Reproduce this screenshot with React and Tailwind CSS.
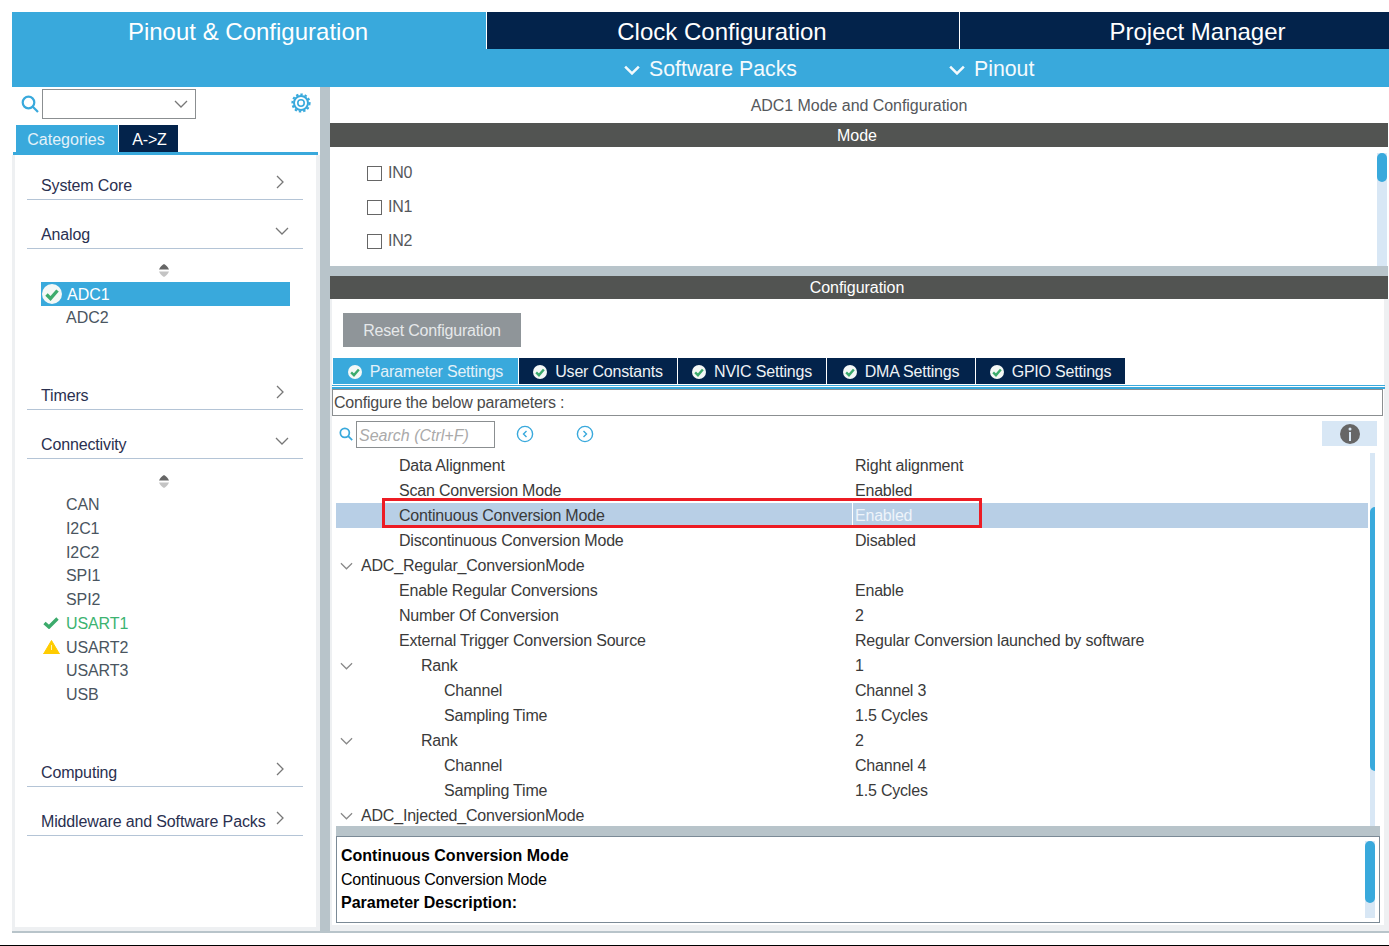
import React from 'react';

const BLUE = 'bg-[#39a9dc]';

function Chevron({ dir = 'down', className = '', weight = 1.3 }) {
  const d = dir === 'down' ? 'M1 1l6 6 6-6' : 'M1 1l6 6-6 6';
  const size = dir === 'down' ? { width: 14, height: 8, viewBox: '0 0 14 8' } : { width: 8, height: 14, viewBox: '0 0 8 14' };
  return (
    <svg {...size} className={className} fill="none" stroke="currentColor" strokeWidth={weight}>
      <path d={d} />
    </svg>
  );
}

function Magnifier({ size = 18 }) {
  return (
    <svg width={size} height={size} viewBox="0 0 18 18" fill="none" stroke="#39a9dc" strokeWidth="2.2">
      <circle cx="7.5" cy="7.5" r="5.8" />
      <path d="M11.8 11.8L17 17" />
    </svg>
  );
}

function CheckBadge({ size = 14 }) {
  return (
    <svg width={size} height={size} viewBox="0 0 20 20" className="shrink-0">
      <circle cx="10" cy="10" r="10" fill="#f4f8f6" />
      <path d="M4.5 10.5l4 4 7-8" fill="none" stroke="#3cab6c" strokeWidth="3.4" />
    </svg>
  );
}

function SortArrows() {
  return (
    <div className="flex justify-center pr-[3px]">
      <svg width="10" height="13" viewBox="0 0 10 13">
        <path d="M5 0C7 1 9 3 10 5.5H0C1 3 3 1 5 0z" fill="#666" />
        <path d="M0 7.5h10C9 10 7 12 5 13C3 12 1 10 0 7.5z" fill="#c4c4c4" />
      </svg>
    </div>
  );
}

function Section({ label, open, short, children }) {
  return (
    <>
      <div className={`ml-3 mr-[13px] ${short ? 'h-[45px]' : 'h-[49px]'} flex items-end justify-between border-b border-[#b4c4d6] pb-[3px] pl-[14px] pr-[15px] text-[#2a3050] tracking-[-0.14px]`}>
        <span className="leading-5">{label}</span>
        {open ? (
          <Chevron className="text-[#777] mb-[10px] -mr-[1px]" />
        ) : (
          <Chevron dir="right" className="text-[#777] mb-[4px] mr-[4px] relative -top-[3px]" />
        )}
      </div>
      {children}
    </>
  );
}

function Sidebar() {
  const peripherals = ['CAN', 'I2C1', 'I2C2', 'SPI1', 'SPI2', 'USART1', 'USART2', 'USART3', 'USB'];
  return (
    <aside className="w-[308px] shrink-0 flex flex-col">
      <div className="h-[38px] flex items-start pt-[2px] pl-[9px] pr-[9px]">
        <div className="mt-[6px] mr-[3px]"><Magnifier /></div>
        <div className="w-[154px] h-[30px] border border-[#8b8f91] flex items-center justify-end pr-[7px] text-[#777]">
          <Chevron />
        </div>
        <svg width="20" height="20" viewBox="0 0 20 20" className="ml-auto mt-1" fill="none" stroke="#39a9dc">
          <circle cx="10" cy="10" r="3.2" strokeWidth="1.6" />
          <circle cx="10" cy="10" r="7" strokeWidth="2" />
          <circle cx="10" cy="10" r="8.6" strokeWidth="2" strokeDasharray="2.4 2" />
        </svg>
      </div>
      <div className="flex pl-1 h-[27px] gap-px text-base">
        <div className={`w-[102px] ${BLUE} text-[#e3f1f9] flex items-center justify-center pt-[3px] pr-[2px]`}>Categories</div>
        <div className="w-[59px] bg-[#03234b] text-white flex items-center justify-center pt-[3px] pl-[2px] tracking-[-0.2px]">A-&gt;Z</div>
      </div>
      <div className="h-[3px] ml-[1px] mr-[2px] bg-[#39a9dc]" />
      <div className="flex-1 bg-[#eef0f2] px-[3px] pr-1 pb-1">
        <div className="h-full bg-white">
          <Section label="System Core" short />
          <Section label="Analog" open />
          <div className="h-[112px] pt-[15px]">
            <SortArrows />
            <div className={`mt-[5px] ml-[26px] w-[249px] h-6 ${BLUE} flex items-center text-white`}>
              <span className="ml-[1px] mr-[5px]"><CheckBadge size={20} /></span>
              <span className="pt-[2px]">ADC1</span>
            </div>
            <div className="mt-[1px] ml-[51px] h-[22px] leading-[22px] text-[#4a5560]">ADC2</div>
          </div>
          <Section label="Timers" />
          <Section label="Connectivity" open />
          <div className="h-[279px] pt-[16px]">
            <SortArrows />
            <div className="mt-[5px]">
              {peripherals.map((p) => (
                <div key={p} className={`relative h-[23.75px] leading-[24px] pl-[51px] tracking-[-0.1px] ${p === 'USART1' ? 'text-[#3cb371]' : 'text-[#4a5560]'}`}>
                  {p === 'USART1' && (
                    <svg width="16" height="12" viewBox="0 0 16 12" className="absolute left-[28px] top-[5px]">
                      <path d="M1.5 6l4.5 4 8.5-8.5" fill="none" stroke="#3cab6c" strokeWidth="3.4" />
                    </svg>
                  )}
                  {p === 'USART2' && (
                    <svg width="17" height="14" viewBox="0 0 17 14" className="absolute left-[28px] top-[4px]">
                      <path d="M8.5 0.5L16.5 14H0.5z" fill="#ffcc00" stroke="#ffcc00" strokeLinejoin="round" />
                      <path d="M8.5 5v5" stroke="#fff3b0" strokeWidth="1" />
                    </svg>
                  )}
                  {p}
                </div>
              ))}
            </div>
          </div>
          <Section label="Computing" />
          <Section label="Middleware and Software Packs" />
        </div>
      </div>
    </aside>
  );
}

function ScrollTrack({ className, thumb }) {
  return (
    <div className={`absolute w-[10px] bg-[#d8e7f5] ${className}`}>
      <div className={`absolute w-[10px] bg-[#39a9dc] rounded-[5px] ${thumb}`} />
    </div>
  );
}

const rows = [
  { n: 'Data Alignment', v: 'Right alignment', p: 'pl-[63px]' },
  { n: 'Scan Conversion Mode', v: 'Enabled', p: 'pl-[63px]' },
  { n: 'Continuous Conversion Mode', v: 'Enabled', p: 'pl-[63px]', sel: true },
  { n: 'Discontinuous Conversion Mode', v: 'Disabled', p: 'pl-[63px]' },
  { n: 'ADC_Regular_ConversionMode', v: '', p: 'pl-[25px]', open: true },
  { n: 'Enable Regular Conversions', v: 'Enable', p: 'pl-[63px]' },
  { n: 'Number Of Conversion', v: '2', p: 'pl-[63px]' },
  { n: 'External Trigger Conversion Source', v: 'Regular Conversion launched by software', p: 'pl-[63px]' },
  { n: 'Rank', v: '1', p: 'pl-[85px]', open: true },
  { n: 'Channel', v: 'Channel 3', p: 'pl-[108px]' },
  { n: 'Sampling Time', v: '1.5 Cycles', p: 'pl-[108px]' },
  { n: 'Rank', v: '2', p: 'pl-[85px]', open: true },
  { n: 'Channel', v: 'Channel 4', p: 'pl-[108px]' },
  { n: 'Sampling Time', v: '1.5 Cycles', p: 'pl-[108px]' },
  { n: 'ADC_Injected_ConversionMode', v: '', p: 'pl-[25px]', open: true },
];

function ParamTree() {
  return (
    <div className="relative h-[373px] ml-[4px] mr-[9px] overflow-hidden">
      <div className="w-[1032px]">
        {rows.map((r, i) => (
          <div key={i} className={`relative h-[25px] flex items-center text-[#3a3a3a] tracking-[-0.2px] ${r.sel ? 'bg-[#b8cfe6]' : ''}`}>
            {r.open && <Chevron className="absolute left-[4px] top-[9px] text-[#888] w-[13px]" />}
            <span className={`w-[519px] shrink-0 ${r.p}`}>{r.n}</span>
            <span className={r.sel ? 'text-[#eef4fa]' : ''}>{r.v}</span>
            {r.sel && <span className="absolute left-[516px] top-0 h-[25px] w-px bg-white" />}
          </div>
        ))}
      </div>
      <ScrollTrack className="left-[1034px] top-0 h-[373px]" thumb="top-[54px] h-[264px]" />
      <div className="absolute left-[46px] top-[45px] w-[600px] h-[30px] border-[3px] border-[#ed1c24]" />
    </div>
  );
}

function TabButton({ label, width, active }) {
  return (
    <div style={{ width }} className={`h-[26px] pt-px flex items-center justify-center gap-2 tracking-[-0.2px] ${active ? 'bg-[#39a9dc] text-[#e3f1f9]' : 'bg-[#03234b] text-[#eef2f6]'}`}>
      <CheckBadge />
      <span>{label}</span>
    </div>
  );
}

function ConfigPanel() {
  return (
    <div className="flex-1 flex flex-col bg-white border-l-2 border-r-[5px] border-b-[6px] border-[#eef0f2]">
      <div className="h-[59px] pt-[14px] pl-[11px]">
        <div className="w-[178px] h-[34px] bg-[#8f9599] text-[#e6e8ea] flex items-center justify-center tracking-[-0.2px] pt-px">Reset Configuration</div>
      </div>
      <div className="flex pl-[1px] gap-px">
        <TabButton label="Parameter Settings" width={185} active />
        <TabButton label="User Constants" width={158} />
        <TabButton label="NVIC Settings" width={148} />
        <TabButton label="DMA Settings" width={148} />
        <TabButton label="GPIO Settings" width={149} />
      </div>
      <div className="h-[4px] mt-[1px] border-t border-b-2 border-[#39a9dc] -mr-[1px]" />
      <div className="h-[27px] mr-[1px] border border-[#8b8f91] flex items-center pl-[1px] text-[#4a4a4a] tracking-[-0.2px]">
        Configure the below parameters :
      </div>
      <div className="h-[37px] flex items-start pl-[7px] pt-[5px] relative">
        <div className="mt-[6px] mr-[3px]"><Magnifier size={14} /></div>
        <div className="w-[139px] h-[27px] border border-[#8b8f91] flex items-center pl-[2px] italic text-[#aaa] pt-[2px]">Search (Ctrl+F)</div>
        <svg width="18" height="18" viewBox="0 0 18 18" className="ml-[21px] mt-[4px]" fill="none" stroke="#39a9dc">
          <circle cx="9" cy="9" r="7.6" strokeWidth="1.4" />
          <path d="M10.5 6L7.5 9l3 3" strokeWidth="1.4" />
        </svg>
        <svg width="18" height="18" viewBox="0 0 18 18" className="ml-[42px] mt-[4px]" fill="none" stroke="#39a9dc">
          <circle cx="9" cy="9" r="7.6" strokeWidth="1.4" />
          <path d="M7.5 6l3 3-3 3" strokeWidth="1.4" />
        </svg>
        <div className="ml-auto mr-[7px] w-[55px] h-[25px] bg-[#d8e7f5] flex items-center justify-center">
          <svg width="20" height="20" viewBox="0 0 20 20">
            <circle cx="10" cy="10" r="10" fill="#666" />
            <circle cx="10" cy="5" r="1.5" fill="#d8e7f5" />
            <rect x="9" y="8" width="2" height="9" fill="#d8e7f5" />
          </svg>
        </div>
      </div>
      <ParamTree />
      <div className="h-[10px] ml-[4px] mr-[4px] bg-[#b8c4ca]" />
      <div className="relative h-[87px] ml-[4px] mr-[4px] border border-[#7b8a96] pl-[4px] pt-[7px] text-black leading-[23.5px]">
        <div className="font-bold">Continuous Conversion Mode</div>
        <div className="tracking-[-0.2px]">Continuous Conversion Mode</div>
        <div className="font-bold">Parameter Description:</div>
        <ScrollTrack className="left-[1028px] top-[4px] h-[77px]" thumb="top-0 h-[62px]" />
      </div>
    </div>
  );
}

function MainPanel() {
  const modes = ['IN0', 'IN1', 'IN2'];
  return (
    <main className="flex-1 min-w-0 flex flex-col border-l-[10px] border-[#b8c4ca]">
      <div className="h-[36px] pt-[2px] pr-px flex items-center justify-center text-[#55585c] tracking-[-0.05px]">ADC1 Mode and Configuration</div>
      <div className="mr-[1px] h-[24px] pt-[2px] bg-[#525452] text-white flex items-center justify-center pr-[4px]">Mode</div>
      <div className="relative h-[119px] mr-[1px] pt-[9px] pl-[37px]">
        {modes.map((m) => (
          <div key={m} className="h-[34px] flex items-center gap-[6px] text-[#55585c] tracking-[-0.2px]">
            <span className="w-[15px] h-[15px] border border-[#666] bg-white" />
            {m}
          </div>
        ))}
        <ScrollTrack className="right-[1px] top-[6px] h-[113px]" thumb="top-0 h-[29px]" />
      </div>
      <div className="h-[10px] mr-[1px] bg-[#b8c4ca]" />
      <div className="mr-[1px] h-[23px] bg-[#525452] text-white flex items-center justify-center pr-[4px] tracking-[-0.05px]">Configuration</div>
      <ConfigPanel />
    </main>
  );
}

export default function App() {
  return (
    <div className="w-[1389px] h-[946px] bg-white pt-3 pl-3 flex flex-col overflow-hidden text-base font-['Liberation_Sans',Arial,sans-serif]">
      <div className="flex h-[37px] text-2xl text-white gap-px">
        <div className={`w-[474px] ${BLUE} flex items-center justify-center pt-[2px] pr-[2px]`}>Pinout &amp; Configuration</div>
        <div className="w-[472px] bg-[#03234b] flex items-center justify-center pt-[2px] pr-[2px]">Clock Configuration</div>
        <div className="flex-1 bg-[#03234b] flex items-center justify-center pl-[46px] pt-[2px]">Project Manager</div>
      </div>
      <div className={`h-[38px] pt-[3px] ${BLUE} text-[21.3px] text-[#f4fafd] flex items-center`}>
        <div className="flex items-center gap-[9px] ml-[612px]"><Chevron className="w-[16px] h-[10px]" weight={2.2} />Software Packs</div>
        <div className="flex items-center gap-[9px] ml-[152px]"><Chevron className="w-[16px] h-[10px]" weight={2.2} />Pinout</div>
      </div>
      <div className="h-[846px] flex border-b-2 border-[#b8c4ca]">
        <Sidebar />
        <MainPanel />
      </div>
      <div className="mt-auto -ml-3 h-px bg-black" />
    </div>
  );
}
